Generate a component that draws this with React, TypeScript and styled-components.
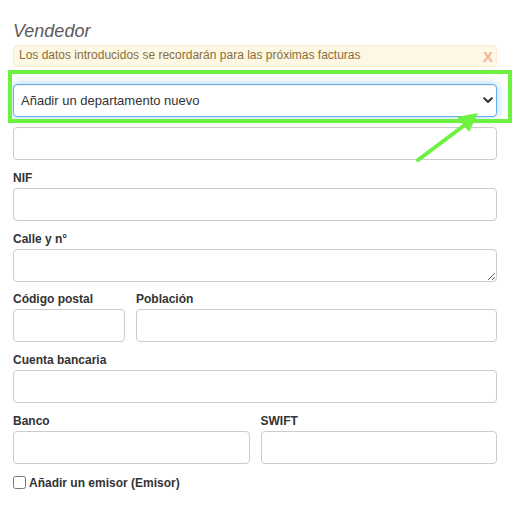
import React from "react";
import styled, { createGlobalStyle } from "styled-components";

const Global = createGlobalStyle`
  html, body { margin: 0; padding: 0; background: #fff; }
  body { font-family: "Liberation Sans", Arial, Helvetica, sans-serif; color: #333; }
  * { box-sizing: border-box; }
`;

const Page = styled.div`
  position: relative;
  width: 529px;
  height: 507px;
  padding: 21px 32px 0 13px;
  overflow: hidden;
`;

const Heading = styled.h3`
  margin: 0;
  font-size: 18px;
  line-height: 20px;
  font-style: italic;
  font-weight: normal;
  color: #5b5b5b;
`;

const Notice = styled.div`
  margin-top: 4px;
  height: 22px;
  display: flex;
  align-items: flex-start;
  justify-content: space-between;
  padding: 2px 3px 0 5px;
  background: #fcf8e3;
  border: 1px solid #faebcc;
  border-radius: 4px;
  color: #8a6d3b;
  font-size: 12px;
  line-height: 14px;
`;

const Close = styled.span`
  font-size: 15px;
  line-height: 16px;
  font-weight: bold;
  color: #f4b29b;
  margin-top: 1px;
`;

const SelectWrap = styled.div`
  position: relative;
  margin-top: 17px;
`;

const Select = styled.select`
  display: block;
  width: 100%;
  height: 33px;
  padding: 0 30px 0 7px;
  appearance: none;
  -webkit-appearance: none;
  background: #fff;
  border: 1px solid #66afe9;
  border-radius: 4px;
  box-shadow: inset 0 1px 1px rgba(0, 0, 0, 0.075), 0 0 8px rgba(102, 175, 233, 0.6);
  font-family: inherit;
  font-size: 13px;
  color: #333;
  outline: none;
`;

const Chevron = styled.svg`
  position: absolute;
  right: 4px;
  top: 13px;
  pointer-events: none;
`;

const Group = styled.div<{ $first?: boolean }>`
  margin-top: ${(p) => (p.$first ? "10px" : "10.8px")};
  min-width: 0;
`;

const Label = styled.label`
  display: block;
  margin-bottom: 2px;
  font-size: 12px;
  line-height: 15px;
  font-weight: bold;
  color: #333;
`;

const Input = styled.input`
  display: block;
  width: 100%;
  height: 33px;
  padding: 0 7px;
  border: 1px solid #ccc;
  border-radius: 4px;
  background: #fff;
  font-family: inherit;
  font-size: 13px;
  outline: none;
`;

const TextArea = styled.textarea`
  display: block;
  width: 100%;
  height: 33px;
  padding: 4px 7px;
  border: 1px solid #ccc;
  border-radius: 4px;
  background: #fff;
  font-family: inherit;
  font-size: 13px;
  resize: vertical;
  outline: none;
`;

const Row = styled.div<{ $cols: string }>`
  display: grid;
  grid-template-columns: ${(p) => p.$cols};
  column-gap: 11px;
`;

const CheckRow = styled.label`
  display: flex;
  align-items: center;
  margin-top: 11px;
  font-size: 12px;
  line-height: 17px;
  font-weight: bold;
  color: #333;
`;

const Check = styled.input`
  width: 13px;
  height: 13px;
  margin: 0 3px 0 0;
  position: relative;
  top: -1px;
`;

const Annotation = styled.svg`
  position: absolute;
  left: 0;
  top: 0;
  pointer-events: none;
`;

export default function App() {
  return (
    <>
      <Global />
      <Page>
        <Heading>Vendedor</Heading>
        <Notice>
          <span>Los datos introducidos se recordarán para las próximas facturas</span>
          <Close>X</Close>
        </Notice>
        <SelectWrap>
          <Select defaultValue="nuevo">
            <option value="nuevo">Añadir un departamento nuevo</option>
          </Select>
          <Chevron width="10" height="7" viewBox="0 0 10 7">
            <path d="M1.2 1.2 L5 5 L8.8 1.2" fill="none" stroke="#333" strokeWidth="2" strokeLinecap="round" strokeLinejoin="round" />
          </Chevron>
        </SelectWrap>
        <Group $first>
          <Input />
        </Group>
        <Group>
          <Label>NIF</Label>
          <Input />
        </Group>
        <Group>
          <Label>Calle y n°</Label>
          <TextArea />
        </Group>
        <Row $cols="112px 1fr">
          <Group>
            <Label>Código postal</Label>
            <Input />
          </Group>
          <Group>
            <Label>Población</Label>
            <Input />
          </Group>
        </Row>
        <Group>
          <Label>Cuenta bancaria</Label>
          <Input />
        </Group>
        <Row $cols="1fr 1fr">
          <Group>
            <Label>Banco</Label>
            <Input />
          </Group>
          <Group>
            <Label>SWIFT</Label>
            <Input />
          </Group>
        </Row>
        <CheckRow>
          <Check type="checkbox" />
          Añadir un emisor (Emisor)
        </CheckRow>
        <Annotation width="529" height="507" viewBox="0 0 529 507">
          <rect x="10" y="72" width="500" height="49" fill="none" stroke="#6cf23f" strokeWidth="4" />
          <line x1="418" y1="160" x2="466" y2="124" stroke="#6cf23f" strokeWidth="4" strokeLinecap="round" />
          <polygon points="478,113 457,117 469,132" fill="#6cf23f" />
        </Annotation>
      </Page>
    </>
  );
}
